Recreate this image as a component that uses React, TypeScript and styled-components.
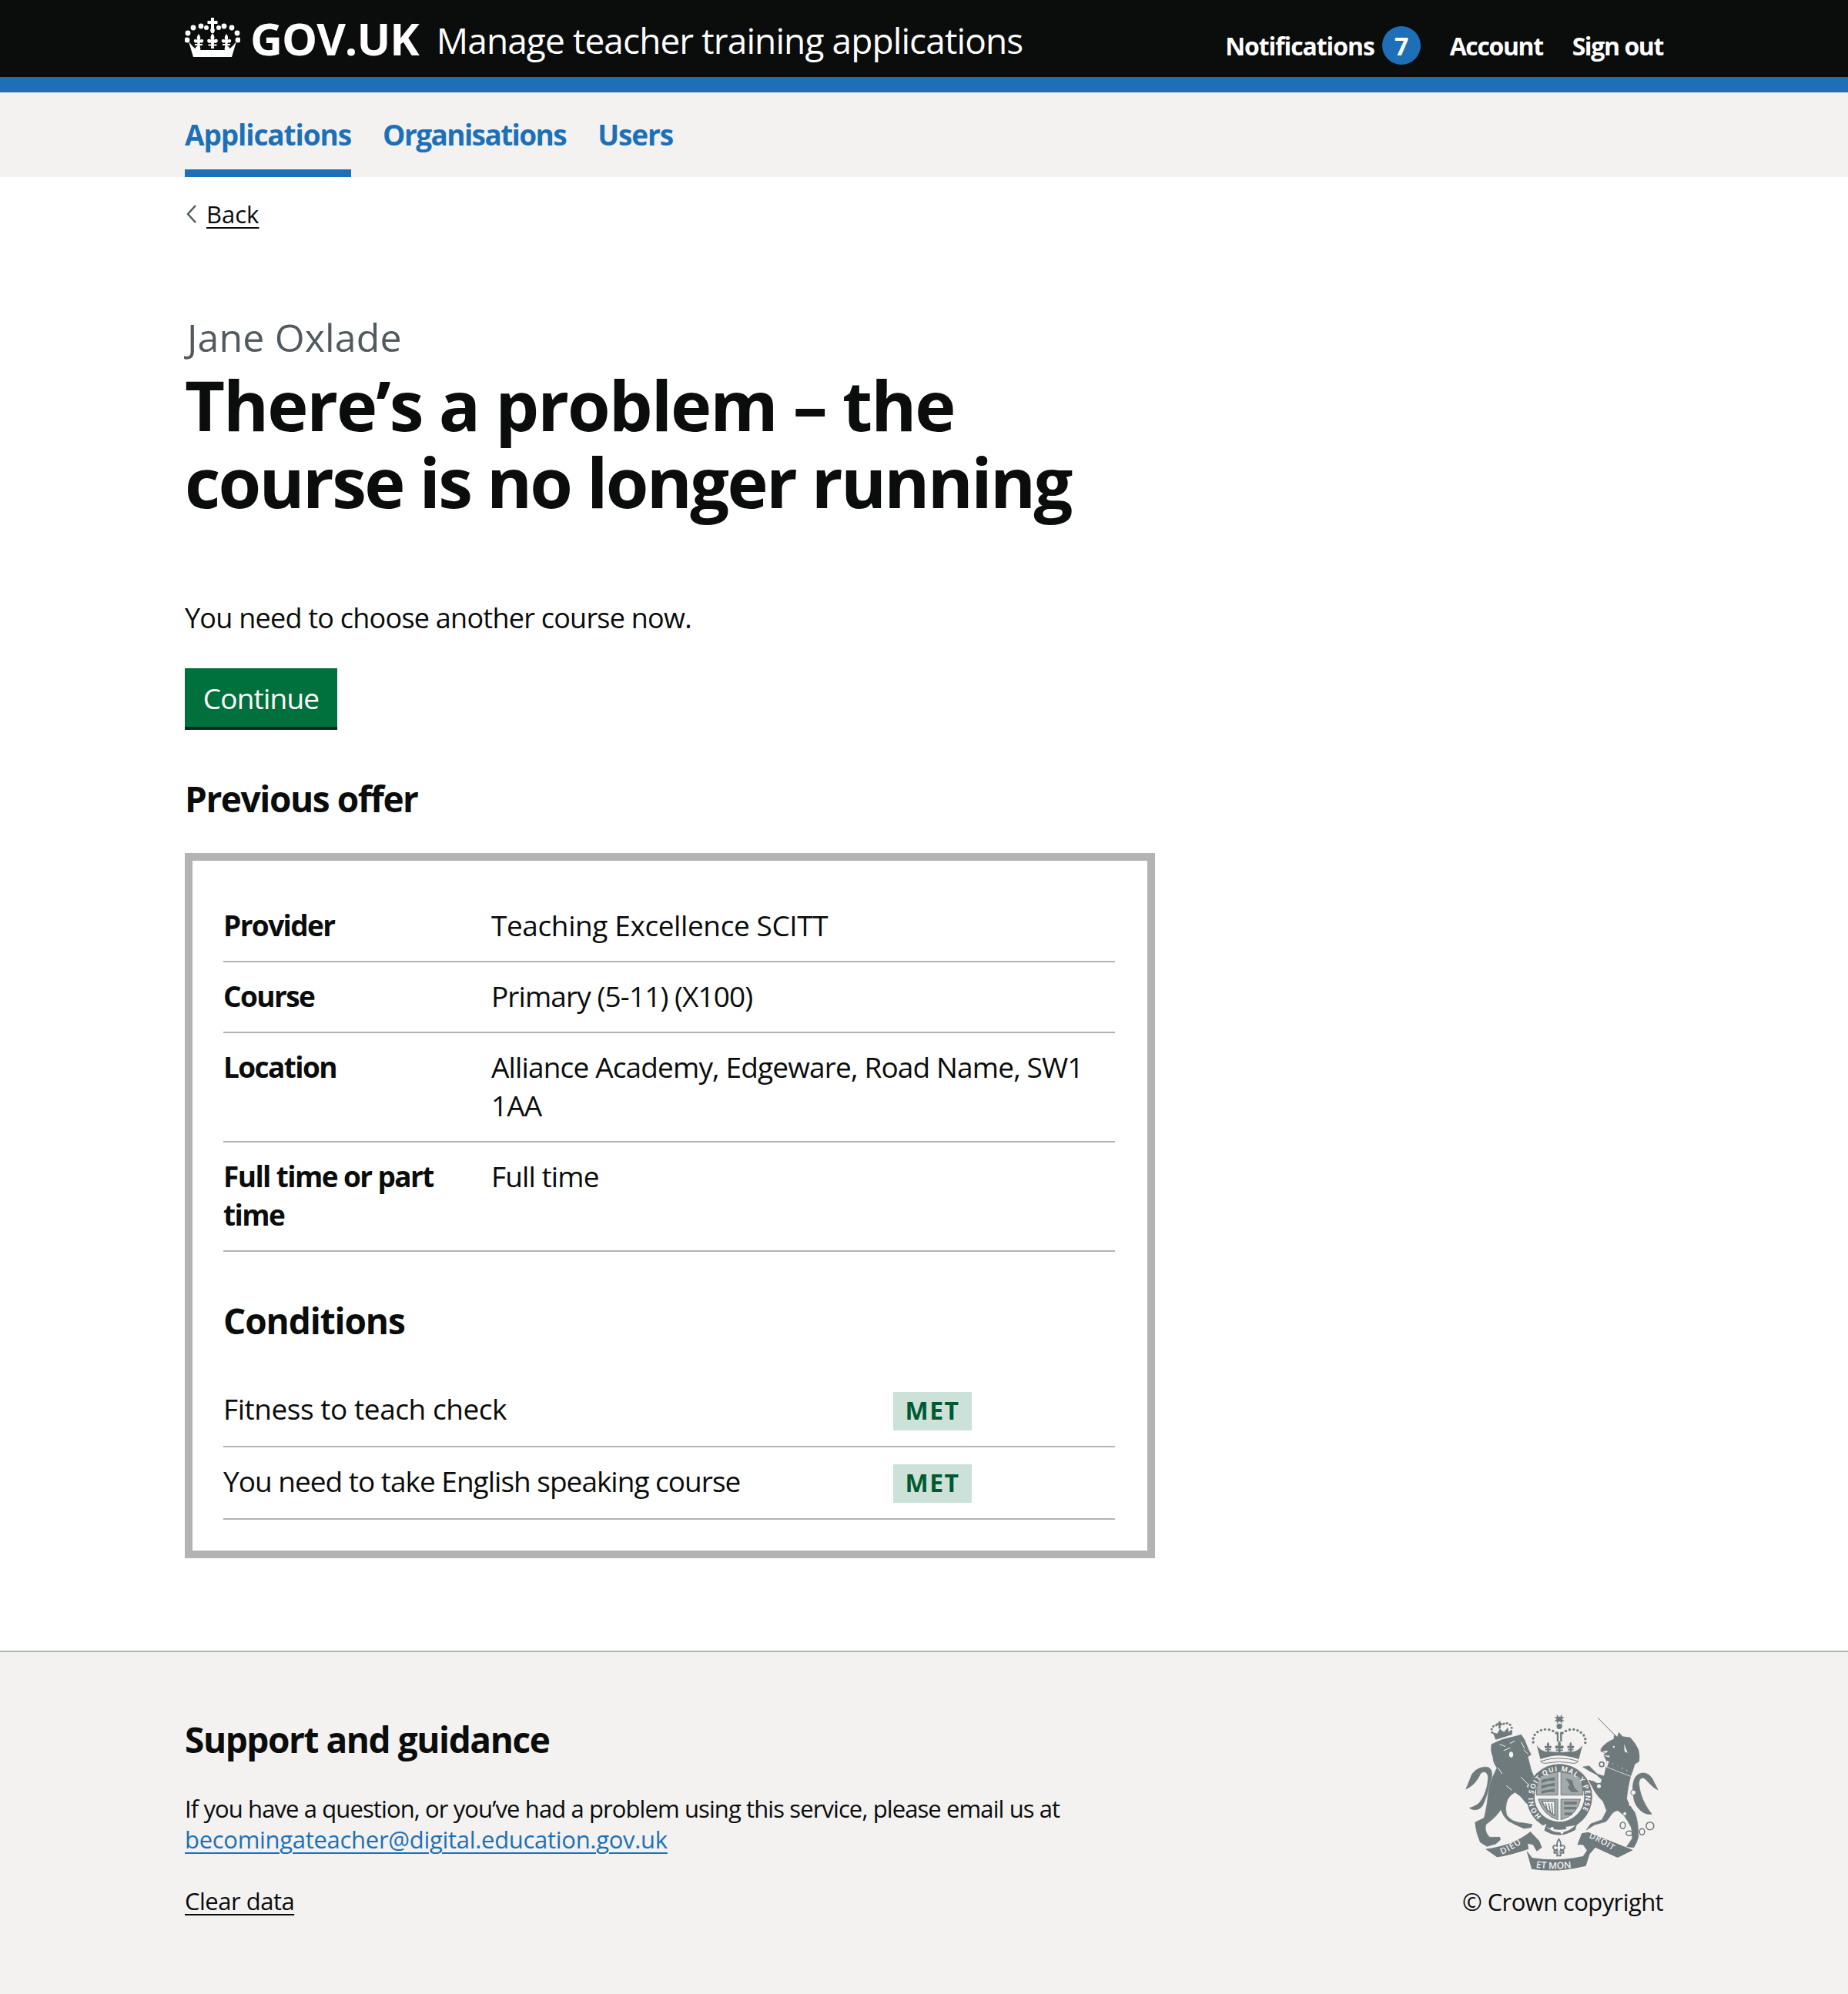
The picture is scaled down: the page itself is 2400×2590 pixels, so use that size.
import React from "react";
import styled, { createGlobalStyle } from "styled-components";

const Global = createGlobalStyle`
  html, body { margin: 0; padding: 0; background: #fff; }
  body { font-family: "Open Sans", "Noto Sans", sans-serif; color: #0b0c0c; }
  * { box-sizing: border-box; }
`;

const Container = styled.div`
  width: 1920px;
  margin: 0 auto;
`;
const HeaderBar = styled.header`
  background: #0b0c0c;
  height: 120px;
  border-bottom: 20px solid #1d70b8;
`;
const HeaderRow = styled(Container)`
  display: flex;
  align-items: center;
  height: 100px;
  color: #fff;
`;
const Logo = styled.svg`
  width: 72px;
  height: 52px;
  margin: -4px 13px 0 0;
  flex: none;
`;
const Wordmark = styled.span`
  font-size: 58px;
  font-weight: 700;
  letter-spacing: -1px;
  margin: -2px 23px 0 0;
`;
const ServiceName = styled.span`
  font-size: 46px;
  letter-spacing: -0.9px;
  margin-top: 4px;
  flex: 1;
`;
const HeaderLinks = styled.nav`
  display: flex;
  align-items: center;
  gap: 38px;
  font-size: 32px;
  font-weight: 700;
  letter-spacing: -1.4px;
  margin-top: 18px;
`;
const Notifications = styled.span`
  display: flex;
  align-items: center;
  gap: 10px;
  letter-spacing: -1.1px;
`;
const Badge = styled.span`
  width: 50px;
  height: 50px;
  border-radius: 50%;
  background: #1d70b8;
  display: flex;
  align-items: center;
  justify-content: center;
  font-weight: 700;
`;
const NavBar = styled.nav`
  background: #f3f2f1;
  height: 110px;
`;
const NavRow = styled(Container)`
  display: flex;
  gap: 41px;
  height: 100%;
`;
const NavItem = styled.a<{ $active?: boolean; $track?: number }>`
  display: block;
  height: 110px;
  line-height: 110px;
  font-size: 37px;
  font-weight: 700;
  letter-spacing: ${(p) => p.$track ?? -1.1}px;
  color: #1d70b8;
  border-bottom: 10px solid ${(p) => (p.$active ? "#1d70b8" : "transparent")};
`;
const Main = styled(Container)`
  padding-top: 28px;
  padding-bottom: 120px;
`;
const BackLink = styled.a`
  display: flex;
  align-items: center;
  gap: 8px;
  height: 40px;
  font-size: 31px;
  letter-spacing: 0;
`;
const BackText = styled.span`
  text-decoration: underline;
  text-underline-offset: 5px;
  text-decoration-thickness: 2px;
`;
const Caption = styled.div`
  margin-top: 115px;
  padding-left: 3px;
  font-size: 50px;
  line-height: 50px;
  color: #505a5f;
  letter-spacing: 0.15px;
`;
const Title = styled.h1`
  margin: 12px 0 0;
  font-size: 90px;
  line-height: 100px;
  font-weight: 700;
`;
const TitleLine = styled.span<{ $track: number }>`
  display: block;
  letter-spacing: ${(p) => p.$track}px;
`;
const Lead = styled.p`
  margin: 103px 0 0;
  font-size: 36px;
  line-height: 50px;
  letter-spacing: -0.76px;
`;
const Button = styled.button`
  display: block;
  margin-top: 40px;
  width: 198px;
  height: 80px;
  padding: 0 0 4px;
  border: 0;
  background: #00703c;
  box-shadow: inset 0 -4px 0 #002d18;
  color: #fff;
  font-family: inherit;
  font-size: 37px;
  letter-spacing: -0.8px;
`;
const SectionTitle = styled.h2<{ $top: number; $bottom: number; $track: number }>`
  margin: ${(p) => p.$top}px 0 ${(p) => p.$bottom}px;
  font-size: 46px;
  line-height: 50px;
  font-weight: 700;
  letter-spacing: ${(p) => p.$track}px;
`;
const OfferBox = styled.section`
  width: 1260px;
  border: 10px solid #b1b3b4;
  padding: 40px 42px 40px 40px;
`;
const SummaryRow = styled.div`
  display: grid;
  grid-template-columns: 348px 1fr;
  padding: 19px 0 21px;
  border-bottom: 2px solid #b1b3b4;
  font-size: 37px;
  line-height: 50px;
  letter-spacing: -0.9px;
`;
const Label = styled.div`
  font-weight: 700;
  letter-spacing: -1.6px;
`;
const RowValue = styled.div<{ $track?: number }>`
  letter-spacing: ${(p) => p.$track ?? -0.9}px;
`;
const ConditionRow = styled.div`
  display: grid;
  grid-template-columns: 870px 1fr;
  padding: 22px 0 20px;
  border-bottom: 2px solid #b1b3b4;
  font-size: 37px;
  line-height: 50px;
`;
const ConditionText = styled.div<{ $track: number }>`
  margin-top: -3px;
  letter-spacing: ${(p) => p.$track}px;
`;
const Tag = styled.span`
  display: block;
  width: 102px;
  height: 50px;
  background: #cce2d8;
  color: #005a30;
  font-size: 32px;
  line-height: 48px;
  font-weight: 700;
  letter-spacing: 1.4px;
  text-align: center;
`;
const Footer = styled.footer`
  background: #f3f2f1;
  border-top: 2px solid #b1b3b4;
  height: 446px;
`;
const FooterRow = styled(Container)`
  display: flex;
  justify-content: space-between;
  padding-top: 88px;
`;
const FooterTitle = styled.h2`
  margin: 0 0 45px;
  font-size: 46px;
  line-height: 50px;
  font-weight: 700;
  letter-spacing: -1.45px;
`;
const FooterText = styled.p`
  margin: 0;
  font-size: 31px;
  line-height: 40px;
  letter-spacing: -0.9px;
`;
const MailLink = styled.a`
  color: #1d70b8;
  letter-spacing: -0.3px;
  text-decoration: underline;
  text-underline-offset: 5px;
  text-decoration-thickness: 2px;
`;
const ClearLink = styled.a`
  display: block;
  margin-top: 40px;
  font-size: 31px;
  line-height: 40px;
  letter-spacing: -0.5px;
  text-decoration: underline;
  text-underline-offset: 5px;
  text-decoration-thickness: 2px;
`;
const CopyColumn = styled.div`
  display: flex;
  flex-direction: column;
  align-items: flex-end;
  margin-top: -11px;
`;
const Crest = styled.svg`
  width: 257px;
  height: 210px;
  margin-right: 4px;
  display: block;
`;
const Copyright = styled.div`
  margin-top: 17px;
  font-size: 31px;
  line-height: 40px;
  letter-spacing: -0.6px;
`;

const fleur = (x: number, y: number, s = 1) => (
  <path
    key={`${x}-${y}`}
    transform={`translate(${x} ${y}) scale(${s})`}
    d="M0-9C2-6 3-4 1.5-1 4-3 7-2 6 1 5 3 3 3 2 2L1.5 4 5 4 5 6 1.5 6 2 9-2 9-1.5 6-5 6-5 4-1.5 4-2 2C-3 3-5 3-6 1-7-2-4-3-1.5-1-3-4-2-6 0-9Z"
  />
);

function CrownLogo() {
  return (
    <Logo viewBox="0 0 72 52" fill="#fff" aria-hidden="true">
      {[
        [4, 21],
        [3, 30],
        [11, 14],
        [21, 12],
        [51, 12],
        [61, 14],
        [68, 21],
        [69, 30],
      ].map(([x, y]) => (
        <circle key={`${x}${y}`} cx={x} cy={y} r="3.4" />
      ))}
      <path d="M34 1h4v4h4.500v4H38v5.500l1 3-1.500 3.500h-3L33 17.500l1-3V9h-4.500V5H34Z" />
      <circle cx="28" cy="14" r="3" />
      <circle cx="44" cy="14" r="3" />
      {fleur(36, 31, 1.1)}
      {fleur(18, 31, 1)}
      {fleur(54, 31, 1)}
      <path d="M5 32c3 3 6 8 9 9 0-2 1-3 3-3 3 0 4 3 3 5h32c-1-2 0-5 3-5 2 0 3 1 3 3 3-1 6-6 9-9l-6 20H11Z" />
    </Logo>
  );
}

function CrestMark() {
  const c = "#6f7a7d";
  const bg = "#f3f2f1";
  const mid = "#a3aaac";
  const crownDots = [
    [336, 190], [336, 175], [342, 161], [353, 150], [367, 143], [382, 140],
    [398, 141], [413, 146], [426, 154], [450, 154], [463, 146], [478, 141],
    [494, 140], [509, 144], [522, 152], [533, 163], [539, 177], [539, 192],
  ];
  const lionCrownDots = [
    [176, 152], [174, 139], [181, 128], [192, 123], [222, 118], [234, 116], [246, 122], [252, 134], [249, 147],
  ];
  return (
    <Crest viewBox="60 70 770 630" fill={c} aria-hidden="true">
      <defs>
        <path id="garterArc" d="M368 479A102 102 0 1 1 508 479" />
        <path id="scrollL" d="M214 628Q268 604 318 564" />
        <path id="scrollM" d="M346 678Q435 692 526 672" />
        <path id="scrollR" d="M552 562Q612 584 668 632" />
      </defs>

      {/* royal crown */}
      <path d="M428 80 434 90 442 90 448 80 448 92 458 92 448 100 458 108 448 108 448 120 442 110 434 110 428 120 428 108 418 108 428 100 418 92 428 92Z" />
      <circle cx="438" cy="128" r="11" />
      <path d="M428 150h7v38h-7ZM441 150h7v38h-7Z" />
      {crownDots.map(([x, y]) => (
        <circle key={`${x}-${y}`} cx={x} cy={y} r="5" />
      ))}
      {fleur(438, 208, 2.7)}
      {fleur(394, 208, 2.2)}
      {fleur(482, 208, 2.2)}
      <path d="M350 202Q372 232 400 226L438 230 478 226Q505 232 528 202L514 256Q438 228 364 256Z" />
      <path d="M364 264Q438 240 512 264Q505 276 478 270Q438 262 398 270Q372 276 364 264Z" fill="none" stroke={c} strokeWidth="3" />

      {/* lion */}
      <g transform="translate(60 60)" stroke={c} strokeWidth="2" strokeLinejoin="round">
        <path d="M114 138Q150 118 195 110Q220 104 228 100Q242 115 250 140L258 160 268 178 255 186Q262 215 268 238L278 262 262 290 250 300 264 330 282 364 270 380 248 366 226 340 205 325Q178 340 172 365 166 390 172 412 188 442 240 445L272 450 268 462 240 466Q205 452 178 436 160 420 150 392 132 422 92 450 84 478 106 500L146 500 148 510 130 526 96 536 70 520Q52 480 50 442L85 425Q92 395 96 370 100 330 106 298 118 262 135 230 118 205 120 190 108 165 114 138Z" />
        <path d="M106 292C120 262 118 238 102 228 78 222 52 234 38 254 28 276 22 296 14 312 36 304 56 284 70 254 80 240 96 244 100 262 102 300 84 350 62 370 50 378 38 384 28 386 40 396 62 398 78 378 92 352 100 320 106 292Z" />
      </g>
      {lionCrownDots.map(([x, y]) => (
        <circle key={`${x}-${y}`} cx={x} cy={y} r="4.500" />
      ))}
      <path d="M201 108h8v8h8v7h-8v14h-8v-14h-8v-7h8Z" />
      <path d="M190 180 178 152 196 156 206 138 222 150 238 132 240 150 254 142 254 160Z" />
      <g fill="none" stroke={bg} strokeWidth="3" strokeLinecap="round">
        <path d="M206 198 226 206M246 194 264 186M222 222 246 212M300 220 316 236M290 190 302 214M200 290 214 312M288 326 338 376M232 360 252 376" />
      </g>
      <ellipse cx="250" cy="238" rx="8" ry="11" fill={bg} />

      {/* unicorn */}
      <g transform="translate(360 60)" stroke={c} strokeWidth="2" strokeLinejoin="round">
        <path d="M228 35 292 100 304 110 310 92 324 108 354 112Q376 136 386 160 392 185 388 205L372 215 364 240 356 262Q346 296 340 350 348 372 372 404 386 440 386 498 380 522 368 540L340 537 362 505Q362 480 358 462 346 438 330 415L306 396Q292 396 280 412 266 434 258 440L215 452 183 472 200 448 244 432 262 396 248 360Q230 344 216 322L192 278 210 282 236 296 244 276 222 256 192 240 170 226 194 222 226 254 252 262 258 236 264 206 252 184 272 190 276 182 250 180 258 172 240 166 240 156Q258 130 290 118L292 100Z" />
        <path d="M370 360C362 320 358 276 384 256 410 240 436 258 444 280 452 296 458 306 462 316 442 306 428 290 414 274 400 262 388 272 388 292 392 334 408 372 438 410 412 414 384 396 370 360Z" />
      </g>
      <path d="M624 262 720 308 716 324 618 286Z" fill={bg} />
      <path d="M630 268 640 260 646 276 658 266 664 284 676 276 682 294 694 286 700 302 714 296 720 310 716 322 624 286Z" />
      <circle cx="650" cy="208" r="3.500" fill={bg} />
      <path d="M604 226 628 222 620 232ZM690 196 704 232 692 226Z" fill={bg} />
      <g fill="none" stroke={c} strokeWidth="4.500">
        <ellipse cx="685" cy="514" rx="10" ry="13" />
        <ellipse cx="710" cy="545" rx="12" ry="9" />
        <ellipse cx="760" cy="539" rx="10" ry="12" />
        <circle cx="791" cy="516" r="15" />
      </g>
      <circle cx="603" cy="276" r="9" fill={bg} stroke={c} strokeWidth="5" />
      <circle cx="592" cy="361" r="10" fill={bg} stroke={c} strokeWidth="5" />
      <circle cx="726" cy="386" r="10" fill={bg} stroke={c} strokeWidth="3" />
      <circle cx="716" cy="432" r="7" fill={bg} />
      <circle cx="693" cy="468" r="6" fill={bg} />

      {/* garter and shield */}
      <path d="M368 505Q438 585 510 505L470 545Q440 558 400 545Z" />
      <circle cx="438" cy="403" r="128" />
      <path d="M376 510Q438 572 506 510L500 532Q440 568 380 535Z" />
      <circle cx="438" cy="403" r="97" fill={bg} />
      <path d="M348 396Q350 336 366 322Q400 310 432 306V396ZM444 306Q478 310 512 322Q530 336 530 396H444ZM356 412H432V492Q374 474 356 412ZM444 412H520Q508 474 444 492Z" fill={mid} stroke={c} strokeWidth="3" />
      <path d="M368 336 420 326 420 340 396 340 368 350ZM368 358 420 348 420 362 396 362 368 372ZM368 380 420 370 420 384 396 384 368 390ZM462 330 488 338 496 366 514 384 484 384 470 366 478 356ZM456 422H506V432H456ZM456 442H502V452H456ZM458 464H488V474H458Z" />
      <path d="M370 420H420V476Q384 456 370 420Z" fill={bg} stroke={c} strokeWidth="4" />
      <path d="M384 428 392 460M396 428 404 466M408 428 412 470" fill="none" stroke={c} strokeWidth="4" />
      <circle cx="410" cy="526" r="6" fill={bg} />
      <circle cx="448" cy="541" r="6" fill={bg} />
      <path d="M374 514 388 508 378 534ZM500 514 470 534 462 520Z" fill={bg} />
      <text fontFamily="Open Sans" fontWeight="700" fontSize="27" fill={bg} letterSpacing="3">
        <textPath href="#garterArc">HONI SOIT QUI MAL Y PENSE</textPath>
      </text>

      {/* motto scroll */}
      <g fill={bg} stroke={c} strokeWidth="1.500">{fleur(436, 600, 3.6)}</g>
      <path d="M150 606Q260 592 325 538L360 575 370 600 350 615 335 590 315 585 318 606Q250 630 195 638Z" />
      <path d="M310 612 332 640Q436 656 530 634L552 602 556 626 541 672Q430 700 330 684Z" />
      <path d="M525 545 550 540 620 568 725 610 665 640 578 600 556 626 530 590 508 590Z" />
      <text fontFamily="Open Sans" fontWeight="600" fontSize="34" fill={bg} letterSpacing="3">
        <textPath href="#scrollL">DIEU</textPath>
      </text>
      <text fontFamily="Open Sans" fontWeight="600" fontSize="36" fill={bg}>
        <textPath href="#scrollM">ET MON</textPath>
      </text>
      <text fontFamily="Open Sans" fontWeight="600" fontSize="32" fill={bg} letterSpacing="2">
        <textPath href="#scrollR">DROIT</textPath>
      </text>
    </Crest>
  );
}

export default function App() {
  return (
    <>
      <Global />
      <HeaderBar>
        <HeaderRow>
          <CrownLogo />
          <Wordmark>GOV.UK</Wordmark>
          <ServiceName>Manage teacher training applications</ServiceName>
          <HeaderLinks>
            <Notifications>
              Notifications <Badge>7</Badge>
            </Notifications>
            <span>Account</span>
            <span>Sign out</span>
          </HeaderLinks>
        </HeaderRow>
      </HeaderBar>
      <NavBar>
        <NavRow>
          <NavItem $active>Applications</NavItem>
          <NavItem $track={-1.6}>Organisations</NavItem>
          <NavItem>Users</NavItem>
        </NavRow>
      </NavBar>
      <Main>
        <BackLink>
          <svg width="20" height="28" viewBox="0 0 20 28" fill="none" stroke="#505a5f" strokeWidth="2.500">
            <path d="M14 3 4 14l10 11" />
          </svg>
          <BackText>Back</BackText>
        </BackLink>
        <Caption>Jane Oxlade</Caption>
        <Title>
          <TitleLine $track={-2.05}>There’s a problem – the</TitleLine>
          <TitleLine $track={-2.7}>course is no longer running</TitleLine>
        </Title>
        <Lead>You need to choose another course now.</Lead>
        <Button>Continue</Button>
        <SectionTitle $top={64} $bottom={46} $track={-1.45}>Previous offer</SectionTitle>
        <OfferBox>
          <SummaryRow>
            <Label>Provider</Label>
            <RowValue $track={-0.4}>Teaching Excellence SCITT</RowValue>
          </SummaryRow>
          <SummaryRow>
            <Label>Course</Label>
            <RowValue>Primary (5-11) (X100)</RowValue>
          </SummaryRow>
          <SummaryRow>
            <Label>Location</Label>
            <RowValue $track={-0.85}>
              Alliance Academy, Edgeware, Road Name, SW1
              <br />
              1AA
            </RowValue>
          </SummaryRow>
          <SummaryRow>
            <Label>
              Full time or part
              <br />
              time
            </Label>
            <RowValue>Full time</RowValue>
          </SummaryRow>
          <SectionTitle $top={64} $bottom={46} $track={-1.1}>Conditions</SectionTitle>
          <ConditionRow>
            <ConditionText $track={-0.45}>Fitness to teach check</ConditionText>
            <Tag>MET</Tag>
          </ConditionRow>
          <ConditionRow>
            <ConditionText $track={-1}>You need to take English speaking course</ConditionText>
            <Tag>MET</Tag>
          </ConditionRow>
        </OfferBox>
      </Main>
      <Footer>
        <FooterRow>
          <div>
            <FooterTitle>Support and guidance</FooterTitle>
            <FooterText>
              If you have a question, or you’ve had a problem using this service, please email us at
              <br />
              <MailLink>becomingateacher@digital.education.gov.uk</MailLink>
            </FooterText>
            <ClearLink>Clear data</ClearLink>
          </div>
          <CopyColumn>
            <CrestMark />
            <Copyright>© Crown copyright</Copyright>
          </CopyColumn>
        </FooterRow>
      </Footer>
    </>
  );
}
